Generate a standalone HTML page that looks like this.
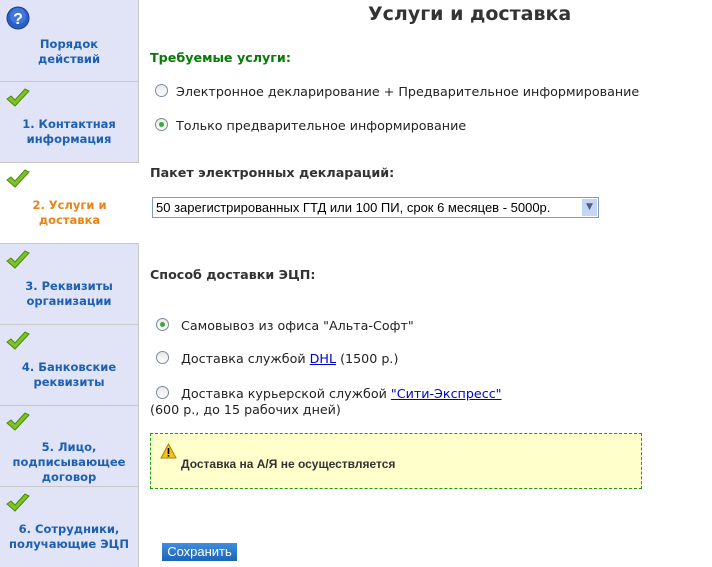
<!DOCTYPE html>
<html><head><meta charset="utf-8"><style>
body{margin:0;width:712px;height:567px;position:relative;background:#fff;font-family:"DejaVu Sans","Liberation Sans",sans-serif;overflow:hidden}
.sb{position:absolute;left:0;top:0;width:138px;height:567px;background:#e0e4f6;border-right:1px solid #c8c8c8}
.it{position:absolute;left:0;width:138px;height:80px;border-bottom:1px solid #c8c8c8;text-align:center;font-weight:bold;font-size:11.5px;line-height:15px;color:#1d5fb0}
.it .t{position:absolute;left:0;right:0}
.it.act{background:#fff;color:#e8841a;width:139px}
.ck{position:absolute;left:6px;top:6px}
.a{position:absolute;font-size:12.7px;color:#222;white-space:nowrap}
.b{font-weight:bold}
.r{position:absolute;width:11px;height:11px;border:1px solid #7a8a9a;border-radius:50%;background:linear-gradient(#e8e8e8,#fff)}
.r.on::after{content:"";position:absolute;left:3px;top:3px;width:5px;height:5px;border-radius:50%;background:#3aa83a}
a{color:#0000cc}
</style></head><body>
<div class="sb">
<div class="it" style="top:0;height:81px"><svg style="position:absolute;left:6px;top:6px" width="24" height="24"><circle cx="12" cy="12" r="11" fill="#2a5fc8" stroke="#1a3f90"/><circle cx="12" cy="10" r="8" fill="#5b8ee8" opacity=".5"/><text x="12" y="18" text-anchor="middle" font-size="16" font-weight="bold" fill="#fff" font-family="Liberation Sans">?</text></svg><div class="t" style="top:37px">Порядок<br>действий</div></div>
<div class="it" style="top:82px"><svg class="ck" width="24" height="20"><path d="M1 11 L9 18 L23 3 L19 1 L9 12 L5 8 Z" fill="#7cc424" stroke="#4a8a10"/></svg><div class="t" style="top:35px">1. Контактная<br>информация</div></div>
<div class="it act" style="top:163px"><svg class="ck" width="24" height="20"><path d="M1 11 L9 18 L23 3 L19 1 L9 12 L5 8 Z" fill="#7cc424" stroke="#4a8a10"/></svg><div class="t" style="top:35px">2. Услуги и<br>доставка</div></div>
<div class="it" style="top:244px"><svg class="ck" width="24" height="20"><path d="M1 11 L9 18 L23 3 L19 1 L9 12 L5 8 Z" fill="#7cc424" stroke="#4a8a10"/></svg><div class="t" style="top:35px">3. Реквизиты<br>организации</div></div>
<div class="it" style="top:325px"><svg class="ck" width="24" height="20"><path d="M1 11 L9 18 L23 3 L19 1 L9 12 L5 8 Z" fill="#7cc424" stroke="#4a8a10"/></svg><div class="t" style="top:35px">4. Банковские<br>реквизиты</div></div>
<div class="it" style="top:406px"><svg class="ck" width="24" height="20"><path d="M1 11 L9 18 L23 3 L19 1 L9 12 L5 8 Z" fill="#7cc424" stroke="#4a8a10"/></svg><div class="t" style="top:34px">5. Лицо,<br>подписывающее<br>договор</div></div>
<div class="it" style="top:487px;border-bottom:0"><svg class="ck" width="24" height="20"><path d="M1 11 L9 18 L23 3 L19 1 L9 12 L5 8 Z" fill="#7cc424" stroke="#4a8a10"/></svg><div class="t" style="top:35px">6. Сотрудники,<br>получающие ЭЦП</div></div>
</div>
<div class="a b" style="left:368px;top:3px;font-size:19px;color:#333">Услуги и доставка</div>
<div class="a b" style="left:150px;top:50px;color:#0a7a0a">Требуемые услуги:</div>
<div class="r" style="left:155px;top:84px"></div><div class="a" style="left:176px;top:84px">Электронное декларирование + Предварительное информирование</div>
<div class="r on" style="left:155px;top:118px"></div><div class="a" style="left:176px;top:118px">Только предварительное информирование</div>
<div class="a b" style="left:150px;top:165px;color:#333">Пакет электронных деклараций:</div>
<div style="position:absolute;left:152px;top:197px;width:445px;height:19px;border:1px solid #7f9db9;background:#fff"><span class="a" style="left:3px;top:2px;font-family:'Liberation Sans',sans-serif;font-size:13px;color:#000">50 зарегистрированных ГТД или 100 ПИ, срок 6 месяцев - 5000р.</span><div style="position:absolute;right:1px;top:1px;width:15px;height:17px;background:#c5d5f5;color:#4d6185;font-size:9px;text-align:center;line-height:17px">&#9660;</div></div>
<div class="a b" style="left:150px;top:267px;color:#333">Способ доставки ЭЦП:</div>
<div class="r on" style="left:156px;top:318px"></div><div class="a" style="left:181px;top:318px">Самовывоз из офиса "Альта-Софт"</div>
<div class="r" style="left:156px;top:351px"></div><div class="a" style="left:181px;top:351px">Доставка службой <a href="#">DHL</a> (1500 р.)</div>
<div class="r" style="left:156px;top:386px"></div><div class="a" style="left:181px;top:386px">Доставка курьерской службой <a href="#">"Сити-Экспресс"</a></div>
<div class="a" style="left:150px;top:402px">(600 р., до 15 рабочих дней)</div>
<div style="position:absolute;left:150px;top:433px;width:490px;height:54px;border:1px dashed #1a9a1a;background:#ffffcc"></div>
<svg style="position:absolute;left:160px;top:443px" width="17" height="16"><path d="M8.5 1 L16 15 L1 15 Z" fill="#f5c020" stroke="#b08000"/><rect x="7.7" y="5" width="1.6" height="6" fill="#000"/><rect x="7.7" y="12" width="1.6" height="1.6" fill="#000"/></svg>
<div class="a b" style="left:181px;top:457px;font-family:'Liberation Sans',sans-serif;font-size:12px;color:#333">Доставка на А/Я не осуществляется</div>
<div style="position:absolute;left:162px;top:543px;width:75px;height:18px;background:linear-gradient(#3d8ee0,#1c64b8);color:#fff;font-family:'Liberation Sans',sans-serif;font-size:13px;line-height:18px;text-align:center">Сохранить</div>
</body></html>
